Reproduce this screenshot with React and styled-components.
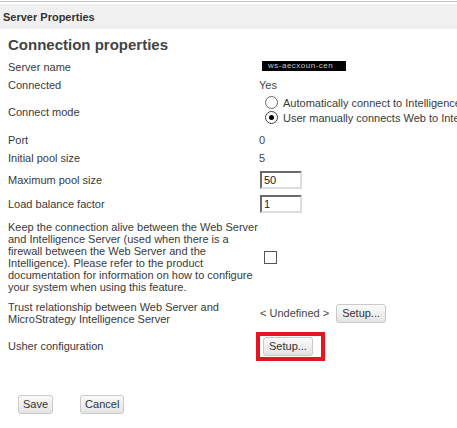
import styled, { createGlobalStyle } from "styled-components";

const GlobalStyle = createGlobalStyle`
  html, body {
    margin: 0;
    background: #ffffff;
    overflow: hidden;
  }
  body {
    font-family: "Liberation Sans", Arial, sans-serif;
    font-size: 11px;
    color: #3a3a3a;
  }
`;

const Frame = styled.div`
  padding-top: 1px;
  width: 457px;
`;

const TopRule = styled.div`
  height: 1px;
  background: #c4c4c4;
`;

const TitleBar = styled.div`
  margin-top: 2px;
  height: 25px;
  display: flex;
  align-items: center;
  padding-left: 3px;
  background: #f0f0f0;
  font-weight: bold;
  color: #333;
`;

const Body = styled.div`
  padding-left: 8px;
`;

const Heading = styled.h2`
  margin: 0;
  height: 29px;
  display: flex;
  align-items: center;
  padding-top: 2px;
  box-sizing: border-box;
  font-size: 15px;
  font-weight: bold;
  color: #444;
`;

const Row = styled.div`
  display: flex;
  align-items: center;
  height: ${(p) => p.$h}px;
`;

const Label = styled.div`
  width: 251px;
  flex-shrink: 0;
  line-height: ${(p) => p.$lh || 13}px;
`;

const Value = styled.div`
  display: flex;
  align-items: center;
  white-space: nowrap;
  color: #444;
  padding-left: ${(p) => p.$indent || 0}px;
`;

/* server name is blacked out, only a faint trace of the letters shows */
const Redacted = styled.span`
  display: inline-block;
  width: 84px;
  height: 10px;
  margin-left: 3px;
  margin-top: -2px;
  background: #000;
  color: #c8c8c8;
  font-size: 8px;
  line-height: 10px;
  overflow: hidden;
  letter-spacing: 0.5px;
  padding-left: 6px;
  box-sizing: border-box;
`;

const RadioGroup = styled.div`
  display: flex;
  flex-direction: column;
  gap: 2px;
  padding-left: 6px;
  margin-top: -5px;
`;

const RadioLine = styled.label`
  display: flex;
  align-items: center;
  gap: 5px;
  height: 13px;
  white-space: nowrap;
`;

const RadioDot = styled.span`
  width: 11px;
  height: 11px;
  flex-shrink: 0;
  border-radius: 50%;
  border: 1px solid ${(p) => (p.$on ? "#444" : "#666")};
  background: #fff;
  position: relative;

  &::after {
    content: "";
    display: ${(p) => (p.$on ? "block" : "none")};
    position: absolute;
    left: 3px;
    top: 3px;
    width: 5px;
    height: 5px;
    border-radius: 50%;
    background: #000;
  }
`;

const TextBox = styled.input`
  width: 42px;
  height: 18px;
  box-sizing: border-box;
  margin: 0 0 0 1px;
  padding: 0 2px;
  border-style: solid;
  border-width: 2px;
  border-color: #6a6a6a #dcdcdc #dcdcdc #6a6a6a;
  font-family: inherit;
  font-size: 11px;
  color: #222;
  outline: none;
`;

const CheckBox = styled.span`
  display: inline-block;
  width: 11px;
  height: 11px;
  margin-left: 5px;
  border: 1px solid #555;
  background: #fff;
`;

const Button = styled.button`
  height: 19px;
  padding: 0 ${(p) => p.$pad || 5}px;
  margin-left: ${(p) => p.$ml || 0}px;
  border: 1px solid #c9c9c9;
  border-radius: 3px;
  background: linear-gradient(#fafafa, #e4e4e4);
  font-family: inherit;
  font-size: 11px;
  color: #333;
  line-height: 17px;
  cursor: pointer;
`;

const Highlight = styled.span`
  position: relative;
  display: inline-flex;
  margin-left: 4px;

  &::after {
    content: "";
    position: absolute;
    left: -7px;
    right: -12px;
    top: -5px;
    bottom: -5px;
    border: 4px solid #e8141f;
    pointer-events: none;
  }
`;

const Footer = styled.div`
  display: flex;
  gap: 27px;
  padding: 30px 0 0 10px;
`;

export default function App() {
  return (
    <Frame>
      <GlobalStyle />
      <TopRule />
      <TitleBar>Server Properties</TitleBar>
      <Body>
        <Heading>Connection properties</Heading>
        <Row $h={18}>
          <Label>Server name</Label>
          <Value>
            <Redacted>ws-aecxoun-cen</Redacted>
          </Value>
        </Row>
        <Row $h={18}>
          <Label>Connected</Label>
          <Value>Yes</Value>
        </Row>
        <Row $h={37}>
          <Label>Connect mode</Label>
          <RadioGroup>
            <RadioLine>
              <RadioDot />
              Automatically connect to Intelligence Server when Web starts
            </RadioLine>
            <RadioLine>
              <RadioDot $on />
              User manually connects Web to Intelligence Server
            </RadioLine>
          </RadioGroup>
        </Row>
        <Row $h={18}>
          <Label>Port</Label>
          <Value>0</Value>
        </Row>
        <Row $h={18}>
          <Label>Initial pool size</Label>
          <Value>5</Value>
        </Row>
        <Row $h={26}>
          <Label>Maximum pool size</Label>
          <TextBox defaultValue="50" />
        </Row>
        <Row $h={22}>
          <Label>Load balance factor</Label>
          <TextBox defaultValue="1" />
        </Row>
        <Row $h={84}>
          <Label $lh={12}>
            Keep the connection alive between the Web Server and Intelligence
            Server (used when there is a firewall between the Web Server and
            the Intelligence). Please refer to the product documentation for
            information on how to configure your system when using this
            feature.
          </Label>
          <CheckBox />
        </Row>
        <Row $h={28}>
          <Label $lh={12}>
            Trust relationship between Web Server and MicroStrategy
            Intelligence Server
          </Label>
          <Value $indent={1}>
            &lt; Undefined &gt;
            <Button $ml={7}>Setup...</Button>
          </Value>
        </Row>
        <Row $h={38}>
          <Label>Usher configuration</Label>
          <Highlight>
            <Button>Setup...</Button>
          </Highlight>
        </Row>
        <Footer>
          <Button $pad={4}>Save</Button>
          <Button $pad={4}>Cancel</Button>
        </Footer>
      </Body>
    </Frame>
  );
}
